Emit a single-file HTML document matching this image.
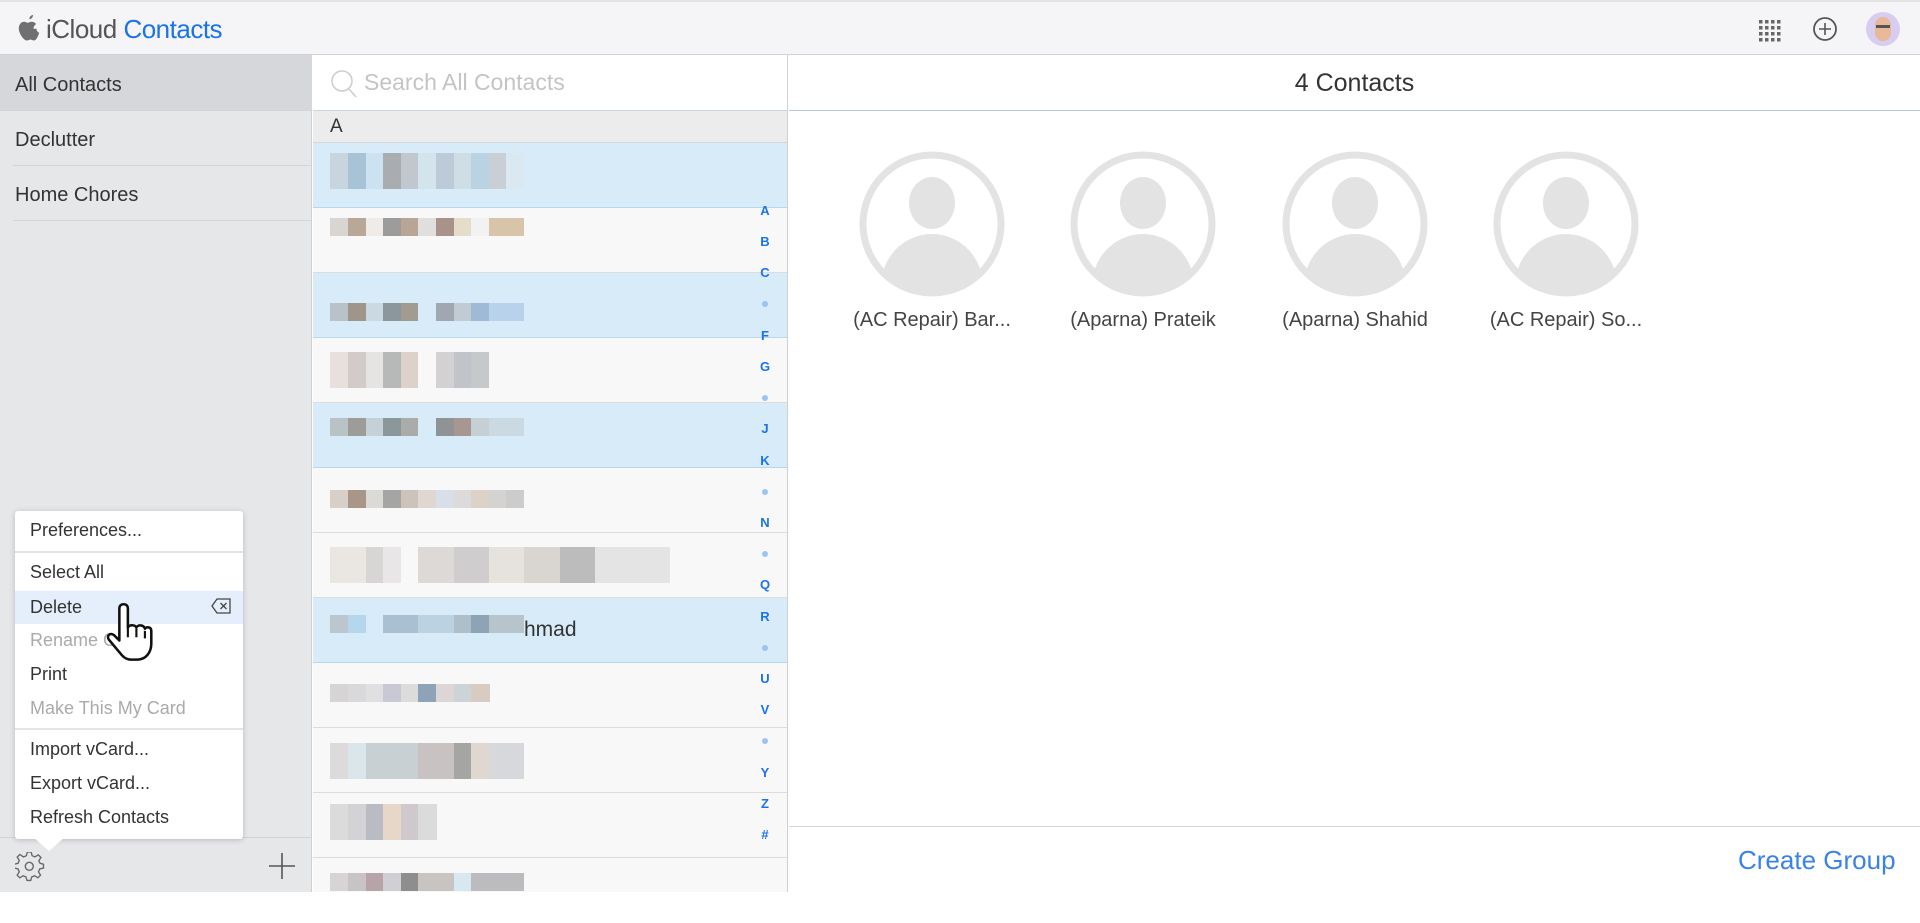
<!DOCTYPE html>
<html><head><meta charset="utf-8"><style>
*{margin:0;padding:0;box-sizing:border-box}
body{width:1920px;height:892px;overflow:hidden;font-family:"Liberation Sans",sans-serif;background:#fff;position:relative;color:#333}
.abs{position:absolute}
#hdr{left:0;top:0;width:1920px;height:55px;background:#f5f5f7;border-bottom:1px solid #cfd2d6;border-top:2px solid #e4e4e4}
#side{left:0;top:55px;width:312px;height:837px;background:#e6e7e9;border-right:1px solid #cfd0d2}
.sitem{position:absolute;left:0;width:312px;height:55px;font-size:20px;line-height:61px;padding-left:15px;color:#333}
.sline{position:absolute;left:13px;right:0;height:1px;background:#d4d5d7}
#mid{left:313px;top:55px;width:475px;height:837px;background:#f8f8f8;border-right:1px solid #cfd0d2}
.row{position:absolute;left:0;width:474px;height:65px;border-bottom:1px solid #dcdcdc}
.row.sel{background:#d7ebf8;border-bottom:1px solid #b9d6ea}
.pix{position:absolute;left:17px;height:36px;width:194px}
.idx{position:absolute;left:440px;width:24px;text-align:center;font-size:13px;font-weight:bold;color:#1a73e8}
.dot{position:absolute;left:449px;width:6px;height:6px;border-radius:50%;background:#9cc4f2}
.av{position:absolute;top:151px;width:146px;height:146px}
.nm{position:absolute;top:309px;width:200px;text-align:center;font-size:20px;color:#444}
.mi{position:absolute;left:15px;font-size:18px;color:#333;padding-left:15px}
</style></head><body>
<div id="hdr" class="abs">
 <svg class="abs" style="left:18px;top:13px" width="22" height="26" viewBox="0 0 22 26"><path d="M15 0c.2 2-1.6 4.2-3.6 4.1-.3-2 1.6-4 3.6-4.1zM18.5 13.8c0 3 2.6 4 2.7 4-.1.3-2.3 7.7-5 7.7-1.4 0-2-.9-3.7-.9s-2.3.9-3.7.9C6 25.5 2 20 1 15.4c-1-4.7 1.7-8.6 5-8.6 1.5 0 2.7 1 3.7 1s2.4-1.1 4.2-1c.7 0 2.9.3 4.2 2.3-.1.1-2.6 1.5-2.6 4.7z" fill="#707070"/></svg>
 <div class="abs" style="left:46px;top:12px;font-size:26px;color:#555;letter-spacing:-0.5px">iCloud <span style="color:#1a73e8">Contacts</span></div>
 <svg class="abs" style="left:1758px;top:16px" width="24" height="24" viewBox="0 0 24 24" fill="#666"><g id="g"><rect x="1" y="2" width="3.5" height="3.5"/><rect x="7" y="2" width="3.5" height="3.5"/><rect x="13" y="2" width="3.5" height="3.5"/><rect x="19" y="2" width="3.5" height="3.5"/></g><use href="#g" y="6"/><use href="#g" y="12"/><use href="#g" y="18" /></svg>
 <svg class="abs" style="left:1812px;top:14px" width="26" height="26" viewBox="0 0 26 26"><circle cx="13" cy="13" r="11" fill="none" stroke="#555" stroke-width="1.8"/><path d="M13 7v12M7 13h12" stroke="#555" stroke-width="1.6"/></svg>
 <div class="abs" style="left:1866px;top:10px;width:34px;height:34px;border-radius:50%;background:#d8cdf0;overflow:hidden"><div style="position:absolute;left:9px;top:5px;width:16px;height:24px;border-radius:8px;background:#e8b898"></div><div style="position:absolute;left:10px;top:13px;width:14px;height:3px;background:#555"></div></div>
</div>

<div id="side" class="abs">
 <div class="sitem" style="top:0;background:#d6d7da">All Contacts</div>
 <div class="sline" style="top:55px;left:0"></div>
 <div class="sitem" style="top:55px">Declutter</div>
 <div class="sline" style="top:110px"></div>
 <div class="sitem" style="top:110px">Home Chores</div>
 <div class="sline" style="top:165px"></div>
 <div class="abs" style="left:0;top:782px;width:312px;height:1px;background:#d2d3d5"></div>
 <svg class="abs" style="left:15px;top:797px" width="30" height="30" viewBox="0 0 30 30"><path d="M13 2h4l1 4 3 1.3 3.5-2.2 2.8 2.8-2.2 3.5L26.4 14l3.6 1v4l-4 1-1.3 3 2.2 3.5-2.8 2.8-3.5-2.2-3 1.3-1 3.6h-4l-1-3.6-3-1.3-3.5 2.2-2.8-2.8 2.2-3.5-1.3-3-4-1v-4l4-1 1.3-3-2.2-3.5 2.8-2.8L9 7.3 12 6z" fill="none" stroke="#666" stroke-width="1.4" transform="translate(0,-2) scale(.95)"/><circle cx="14.3" cy="14.3" r="4" fill="none" stroke="#666" stroke-width="1.4"/></svg>
 <svg class="abs" style="left:268px;top:797px" width="28" height="28" viewBox="0 0 28 28"><path d="M14 1v26M1 14h26" stroke="#555" stroke-width="1.6"/></svg>
</div>

<div class="abs" style="left:15px;top:511px;width:228px;height:328px;background:#fff;border-radius:3px;box-shadow:0 1px 6px rgba(0,0,0,.2)">
 <div class="abs" style="left:0;top:80px;width:228px;height:33px;background:#e4effb"></div>
 <div class="mi" style="left:0;top:9px">Preferences...</div>
 <div class="abs" style="left:0;top:40px;width:228px;height:2px;background:#e3e3e3"></div>
 <div class="mi" style="left:0;top:51px">Select All</div>
 <div class="mi" style="left:0;top:86px">Delete</div>
 <svg class="abs" style="left:196px;top:87px" width="20" height="16" viewBox="0 0 20 16"><path d="M6 1h13v14H6L1 8z" fill="none" stroke="#444" stroke-width="1.3"/><path d="M9.5 5l6 6M15.5 5l-6 6" stroke="#444" stroke-width="1.3"/></svg>
 <div class="mi" style="left:0;top:119px;color:#aaa">Rename Group</div>
 <div class="mi" style="left:0;top:153px">Print</div>
 <div class="mi" style="left:0;top:187px;color:#aaa">Make This My Card</div>
 <div class="abs" style="left:0;top:217px;width:228px;height:2px;background:#e3e3e3"></div>
 <div class="mi" style="left:0;top:228px">Import vCard...</div>
 <div class="mi" style="left:0;top:262px">Export vCard...</div>
 <div class="mi" style="left:0;top:296px">Refresh Contacts</div>
 <div class="abs" style="left:18px;top:326px;width:0;height:0;border-left:16px solid transparent;border-right:16px solid transparent;border-top:14px solid #fff"></div>
</div>
<svg class="abs" style="left:100px;top:600px" width="60" height="66" viewBox="0 0 56 62"><path d="M22 4c3 0 4 2 4 4v18c1-3 7-3 8 0 1-3 7-3 8 1 1-2 6-2 6 2v12c0 8-5 15-13 15h-6c-5 0-8-3-11-7L8 37c-2-3 1-7 5-4l5 5V8c0-2 1-4 4-4z" fill="#fff" stroke="#111" stroke-width="2.4" stroke-linejoin="round"/><path d="M26 26v9M34 27v8M42 29v7" stroke="#111" stroke-width="2"/></svg>

<div id="mid" class="abs">
 <div class="abs" style="left:0;top:0;width:474px;height:56px;background:#fff;border-bottom:1px solid #c9d5de"></div>
 <svg class="abs" style="left:17px;top:14px" width="28" height="30" viewBox="0 0 28 30"><circle cx="12" cy="12" r="10" fill="none" stroke="#ccc" stroke-width="1.5"/><path d="M19 20l7 8" stroke="#ccc" stroke-width="1.5"/></svg>
 <div class="abs" style="left:51px;top:14px;font-size:23px;color:#c4c4c4">Search All Contacts</div>
 <div class="abs" style="left:0;top:56px;width:474px;height:32px;background:#ececec;border-bottom:1px solid #d6d6d6;font-size:19px;line-height:32px;padding-left:17px">A</div>
 <div class="row sel" style="top:88px"><div class="pix" style="top:10px;background:linear-gradient(90deg,#c8d4de 0 18px,#a8c2d6 18px 36px,#cde2f0 36px 53px,#a9adb0 53px 71px,#c0c7cf 71px 88px,#d4e4ec 88px 106px,#bdcbd8 106px 124px,#cfdde4 124px 141px,#b9d3e3 141px 159px,#c8d0d6 159px 176px,#d9e8f1 176px 194px)"></div></div>
 <div class="row" style="top:153px"><div class="pix" style="top:10px;height:18px;background:linear-gradient(90deg,#d8d5d3 0 18px,#b9a898 18px 36px,#f0ebe7 36px 53px,#9d9c9a 53px 71px,#b8a596 71px 88px,#e0dfde 88px 106px,#a99289 106px 124px,#e6dcca 124px 141px,#f2f2f2 141px 159px,#d8c4a8 159px 176px)"></div></div>
 <div class="row sel" style="top:218px"><div class="pix" style="top:30px;height:18px;background:linear-gradient(90deg,#b9c2c8 0 18px,#9f968a 18px 36px,#cbd9e2 36px 53px,#8c979d 53px 71px,#a19b90 71px 88px,#d7ebf8 88px 106px,#a1a7b1 106px 124px,#c0cbd3 124px 141px,#9fbad6 141px 159px,#b7d2ea 159px 176px)"></div></div>
 <div class="row" style="top:283px"><div class="pix" style="top:14px;background:linear-gradient(90deg,#e8e0dc 0 18px,#d2cbc9 18px 36px,#e5e4e2 36px 53px,#b7b8b8 53px 71px,#ddd2c9 71px 88px,#f8f8f8 88px 106px,#d3d1d1 106px 124px,#c1c4c8 124px 141px,#c5c9cc 141px 159px,#f8f8f8 159px 194px)"></div></div>
 <div class="row sel" style="top:348px"><div class="pix" style="top:15px;height:18px;background:linear-gradient(90deg,#b9c2c4 0 18px,#9c9d98 18px 36px,#c5d1d8 36px 53px,#8c979c 53px 71px,#a9aca8 71px 88px,#d7ebf8 88px 106px,#8f9396 106px 124px,#a69890 124px 141px,#c6d0d4 141px 159px,#cbd9e2 159px 176px)"></div></div>
 <div class="row" style="top:413px"><div class="pix" style="top:22px;height:18px;background:linear-gradient(90deg,#d8d0c8 0 18px,#a89688 18px 36px,#dcdad6 36px 53px,#a5a5a3 53px 71px,#ccc3ba 71px 88px,#e0d6d2 88px 106px,#d8dfe8 106px 124px,#dcdadb 124px 141px,#ddd2c8 141px 159px,#d5d3d2 159px 176px,#cdcccc 176px 194px)"></div></div>
 <div class="row" style="top:478px"><div class="pix" style="top:14px;width:340px;background:linear-gradient(90deg,#eae6e2 0 36px,#d8d6d4 36px 53px,#e8e6e6 53px 71px,#f8f8f8 71px 88px,#ddd9d6 88px 124px,#cfcdcd 124px 159px,#e6e2de 159px 194px,#d9d6d2 194px 230px,#bdbcbc 230px 265px,#e4e4e4 265px 340px)"></div></div>
 <div class="row sel" style="top:543px"><div class="pix" style="top:17px;height:18px;background:linear-gradient(90deg,#bcc6ce 0 18px,#b6d6ee 18px 36px,#d7ebf8 36px 53px,#aabfd0 53px 88px,#bcd2e0 88px 124px,#aebfcc 124px 141px,#8ea4b6 141px 159px,#b8c4cc 159px 176px)"></div><div class="abs" style="left:211px;top:20px;font-size:21px;color:#333">hmad</div></div>
 <div class="row" style="top:608px"><div class="pix" style="top:21px;width:160px;height:18px;background:linear-gradient(90deg,#d6d4d4 0 18px,#d9d8da 18px 36px,#e0dfe1 36px 53px,#c8c9d4 53px 71px,#dcdcdc 71px 88px,#8ea2b8 88px 106px,#ddd6d6 106px 124px,#ccd4d8 124px 141px,#d8ccc2 141px 160px)"></div></div>
 <div class="row" style="top:673px"><div class="pix" style="top:15px;background:linear-gradient(90deg,#dcdada 0 18px,#dbe6ea 18px 36px,#c9d0d4 36px 88px,#c8c3c2 88px 124px,#a5a5a4 124px 141px,#e0d8d0 141px 159px,#d6d8dc 159px 194px)"></div></div>
 <div class="row" style="top:738px"><div class="pix" style="top:11px;width:107px;height:36px;background:linear-gradient(90deg,#dcdbdb 0 18px,#d3d3d5 18px 36px,#b9bcc2 36px 53px,#e6d7c8 53px 71px,#cfc8cc 71px 88px,#dcdbdb 88px 107px)"></div></div>
 <div class="row" style="top:803px;border:none"><div class="pix" style="top:15px;height:18px;background:linear-gradient(90deg,#d6d4d4 0 18px,#c8c4c6 18px 36px,#b8a4a8 36px 53px,#d0d0d4 53px 71px,#8e8e8e 71px 88px,#c8c4c2 88px 124px,#d8e8f0 124px 141px,#bcbcbe 141px 159px)"></div></div>
 <div class="idx" style="top:148px">A</div><div class="idx" style="top:179px">B</div><div class="idx" style="top:210px">C</div><div class="dot" style="top:246px"></div><div class="idx" style="top:273px">F</div><div class="idx" style="top:304px">G</div><div class="dot" style="top:340px"></div><div class="idx" style="top:366px">J</div><div class="idx" style="top:398px">K</div><div class="dot" style="top:434px"></div><div class="idx" style="top:460px">N</div><div class="dot" style="top:496px"></div><div class="idx" style="top:522px">Q</div><div class="idx" style="top:554px">R</div><div class="dot" style="top:590px"></div><div class="idx" style="top:616px">U</div><div class="idx" style="top:647px">V</div><div class="dot" style="top:683px"></div><div class="idx" style="top:710px">Y</div><div class="idx" style="top:741px">Z</div><div class="idx" style="top:772px">#</div>
</div>

<div class="abs" style="left:789px;top:55px;width:1131px;height:56px;border-bottom:1px solid #b9c9d2;text-align:center;font-size:25px;line-height:56px;color:#333">4 Contacts</div>
<svg class="av" style="left:859px" viewBox="0 0 146 146"><defs><clipPath id="c"><circle cx="73" cy="73" r="69"/></clipPath></defs><circle cx="73" cy="73" r="69" fill="#fff" stroke="#e3e3e3" stroke-width="7"/><g clip-path="url(#c)" fill="#e3e3e3"><ellipse cx="73" cy="52" rx="23" ry="26"/><ellipse cx="73" cy="135" rx="51" ry="52"/></g></svg>
<svg class="av" style="left:1070px" viewBox="0 0 146 146"><circle cx="73" cy="73" r="69" fill="#fff" stroke="#e3e3e3" stroke-width="7"/><g clip-path="url(#c)" fill="#e3e3e3"><ellipse cx="73" cy="52" rx="23" ry="26"/><ellipse cx="73" cy="135" rx="51" ry="52"/></g></svg>
<svg class="av" style="left:1282px" viewBox="0 0 146 146"><circle cx="73" cy="73" r="69" fill="#fff" stroke="#e3e3e3" stroke-width="7"/><g clip-path="url(#c)" fill="#e3e3e3"><ellipse cx="73" cy="52" rx="23" ry="26"/><ellipse cx="73" cy="135" rx="51" ry="52"/></g></svg>
<svg class="av" style="left:1493px" viewBox="0 0 146 146"><circle cx="73" cy="73" r="69" fill="#fff" stroke="#e3e3e3" stroke-width="7"/><g clip-path="url(#c)" fill="#e3e3e3"><ellipse cx="73" cy="52" rx="23" ry="26"/><ellipse cx="73" cy="135" rx="51" ry="52"/></g></svg>
<div class="nm" style="left:832px">(AC Repair) Bar...</div>
<div class="nm" style="left:1043px">(Aparna) Prateik</div>
<div class="nm" style="left:1255px">(Aparna) Shahid</div>
<div class="nm" style="left:1466px">(AC Repair) So...</div>

<div class="abs" style="left:789px;top:826px;width:1131px;height:1px;background:#d8d8d8"></div>
<div class="abs" style="left:1738px;top:845px;font-size:26px;color:#3a82e4">Create Group</div>
</body></html>
